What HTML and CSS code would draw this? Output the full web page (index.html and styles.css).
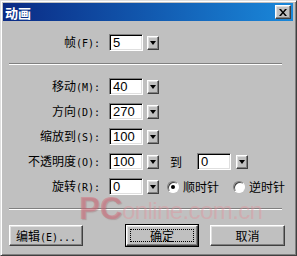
FILE: index.html
```html
<!DOCTYPE html>
<html>
<head>
    <meta charset="utf-8">
    <link rel="stylesheet" href="styles.css">
</head>
<body>
    <div class="window">
        <div class="titlebar">
            <span class="title">动画</span>
            <span class="close">
                <svg width="8" height="7" viewBox="0 0 8 7">
                    <path d="M0 0h2l2 2.5 2-2.5h2l-3 3.5 3 3.5h-2l-2-2.5-2 2.5h-2l3-3.5z" fill="#000"/>
                </svg>
            </span>
        </div>

        <div class="content">
            <div class="field">
                <label class="label">帧<span class="key">(F):</span></label>
                <div class="input">5</div>
                <span class="drop"><i class="arrow"></i></span>
            </div>

            <div class="sep"></div>

            <div class="fields">
                <div class="field">
                    <label class="label">移动<span class="key">(M):</span></label>
                    <div class="input">40</div>
                    <span class="drop"><i class="arrow"></i></span>
                </div>
                <div class="field">
                    <label class="label">方向<span class="key">(D):</span></label>
                    <div class="input">270</div>
                    <span class="drop"><i class="arrow"></i></span>
                </div>
                <div class="field">
                    <label class="label">缩放到<span class="key">(S):</span></label>
                    <div class="input">100</div>
                    <span class="drop"><i class="arrow"></i></span>
                </div>
                <div class="field">
                    <label class="label">不透明度<span class="key">(O):</span></label>
                    <div class="input">100</div>
                    <span class="drop"><i class="arrow"></i></span>
                    <span class="to">到</span>
                    <div class="input input-to">0</div>
                    <span class="drop drop-to"><i class="arrow"></i></span>
                </div>
                <div class="field">
                    <label class="label">旋转<span class="key">(R):</span></label>
                    <div class="input">0</div>
                    <span class="drop"><i class="arrow"></i></span>
                    <span class="radio checked"></span>
                    <span class="radio-text">顺时针</span>
                    <span class="radio radio-ccw"></span>
                    <span class="radio-text">逆时针</span>
                </div>
            </div>

            <div class="sep sep-bottom"></div>

            <div class="actions">
                <button class="btn btn-edit">编辑<span class="key">(E)...</span></button>
                <button class="btn btn-default"><span class="focus">确定</span></button>
                <button class="btn">取消</button>
            </div>
        </div>

        <!-- watermark from the source screenshot -->
        <div class="watermark"><span class="wm-pc">PC</span><span class="wm-rest">online.com.cn</span></div>
    </div>
</body>
</html>
```

FILE: styles.css
```css
* {
    box-sizing: border-box;
}

body {
    margin: 0;
    font-family: "Noto Sans CJK SC", sans-serif;
    font-size: 12px;
    color: #000;
    background: #c0c0c0;
}

.window {
    position: relative;
    width: 297px;
    height: 256px;
    background: #c0c0c0;
    border: 1px solid;
    border-color: #dfdfdf #404040 #404040 #dfdfdf;
    box-shadow: inset 1px 1px #fff, inset -1px -1px #808080;
    padding: 2px 3px 3px 2px;
    overflow: hidden;
}

.titlebar {
    height: 18px;
    display: flex;
    align-items: center;
    justify-content: space-between;
    background: linear-gradient(90deg, #0a2a84, #1a88da);
}

.title {
    color: #fff;
    font-weight: bold;
    font-size: 13px;
    padding-left: 2px;
}

.close {
    width: 16px;
    height: 14px;
    margin-right: 2px;
    display: flex;
    align-items: center;
    justify-content: center;
    background: #c0c0c0;
    border: 1px solid;
    border-color: #fff #404040 #404040 #fff;
    box-shadow: inset -1px -1px #808080, inset 1px 1px #dfdfdf;
}

.content {
    padding-top: 13px;
}

.field {
    display: flex;
    align-items: center;
    height: 17px;
}

.label {
    width: 97px;
    margin-right: 9px;
    text-align: right;
    line-height: 17px;
    white-space: nowrap;
}

/* half-width latin like the old bitmap font */
.key {
    font-family: "DejaVu Sans Mono", monospace;
    font-size: 10px;
}

.input {
    width: 34px;
    height: 17px;
    padding-left: 3px;
    background: #fff;
    border: 1px solid;
    border-color: #808080 #fff #fff #808080;
    box-shadow: inset 1px 1px #000, inset -1px -1px #dfdfdf;
    font-family: "Liberation Sans", sans-serif;
    font-size: 13px;
    line-height: 15px;
}

.drop {
    width: 12px;
    height: 14px;
    margin-left: 4px;
    display: flex;
    align-items: center;
    justify-content: center;
    background: #c0c0c0;
    border: 1px solid;
    border-color: #fff #404040 #404040 #fff;
    box-shadow: inset -1px -1px #808080, inset 1px 1px #dfdfdf;
}

.arrow {
    width: 0;
    height: 0;
    border-left: 3.5px solid transparent;
    border-right: 3.5px solid transparent;
    border-top: 4px solid #000;
}

.to {
    margin-left: 11px;
    width: 12px;
}

.input-to {
    margin-left: 15px;
}

.drop-to {
    margin-left: 5px;
}

.radio {
    width: 12px;
    height: 12px;
    margin-left: 8px;
    border-radius: 50%;
    background: #fff;
    border: 1px solid;
    border-color: #808080 #fff #fff #808080;
    box-shadow: inset 1px 1px #404040;
    display: flex;
    align-items: center;
    justify-content: center;
}

.radio.checked::after {
    content: "";
    width: 4px;
    height: 4px;
    border-radius: 50%;
    background: #000;
}

.radio-ccw {
    margin-left: 14px;
}

.radio-text {
    margin-left: 4px;
    line-height: 17px;
}

.sep {
    height: 2px;
    margin: 12px 11px 0 6px;
    border-top: 1px solid #808080;
    border-bottom: 1px solid #fff;
}

.fields {
    display: flex;
    flex-direction: column;
    gap: 8px;
    margin-top: 13px;
}

.sep-bottom {
    margin-top: 13px;
}

.actions {
    display: flex;
    gap: 12px;
    margin-top: 15px;
    padding: 0 8px 0 6px;
}

.btn {
    width: 75px;
    height: 21px;
    padding: 0;
    font-family: inherit;
    font-size: 12px;
    color: #000;
    background: #c0c0c0;
    border: 1px solid;
    border-color: #fff #404040 #404040 #fff;
    box-shadow: inset -1px -1px #808080, inset 1px 1px #dfdfdf;
}

.btn-edit {
    width: 74px;
    margin-right: auto;
}

.btn-default {
    width: 72px;
    display: flex;
    padding: 3px;
    outline: 1px solid #000;
    outline-offset: 0;
}

.focus {
    flex: 1;
    display: flex;
    align-items: center;
    justify-content: center;
    border: 1px dotted #000;
}

.watermark {
    position: absolute;
    left: 78px;
    top: 192px;
    font-family: "Liberation Sans", sans-serif;
    line-height: 1;
    white-space: nowrap;
    pointer-events: none;
}

.wm-pc {
    font-size: 31px;
    font-weight: bold;
    color: rgba(215, 110, 125, 0.5);
    text-shadow: 1px 1px 1px rgba(120, 60, 60, 0.25);
}

.wm-rest {
    font-size: 24px;
    letter-spacing: -0.6px;
    color: rgba(230, 140, 150, 0.38);
}
```
